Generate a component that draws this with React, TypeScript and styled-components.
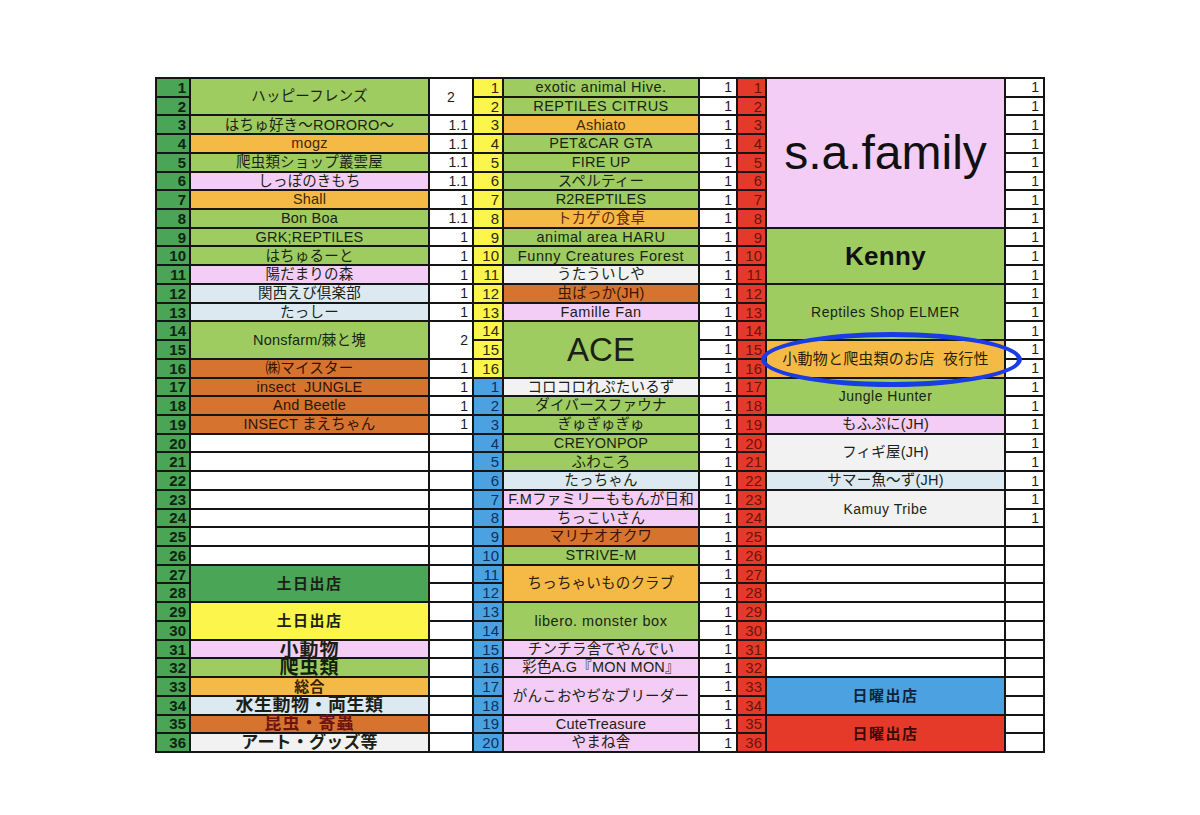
import React from "react";
import styled, { createGlobalStyle } from "styled-components";

const GlobalStyle = createGlobalStyle`
  html, body { margin: 0; padding: 0; background: #ffffff; }
  body { font-family: "Liberation Sans", "Noto Sans CJK JP", sans-serif; }
`;

const COL = {
  green: "#9ecc60",
  orange: "#f5ba45",
  pink: "#f3cdf5",
  lblue: "#dde9f1",
  brown: "#d6732f",
  gray: "#f2f2f2",
  white: "#ffffff",
  dgreen: "#4aa557",
  yellow: "#fcf54b",
  blue: "#4ca2e0",
  red: "#e53a2a",
};

const Page = styled.div`
  padding: 77px 0 0 155px;
`;

const Sheet = styled.div`
  position: relative;
  display: grid;
  grid-template-columns: 32px 237px 42px 28px 194px 36px 27px 237px 37px;
  grid-template-rows: repeat(36, 1fr);
  gap: 2px;
  padding: 2px;
  width: 890px;
  height: 676px;
  box-sizing: border-box;
  background: #151515;
  font-family: "Liberation Sans", "Noto Sans CJK JP", sans-serif;
`;

type Pos = { $c: number; $r: number; $s?: number };

const CellBase = styled.div<Pos>`
  grid-column: ${(p) => p.$c};
  grid-row: ${(p) => p.$r} / span ${(p) => p.$s ?? 1};
  display: flex;
  align-items: center;
  min-width: 0;
  min-height: 0;
  line-height: 1;
  white-space: nowrap;
`;

const NumCell = styled(CellBase)<{ $bg: string; $fg: string; $bold?: boolean }>`
  justify-content: flex-end;
  padding-right: 3px;
  background: ${(p) => p.$bg};
  color: ${(p) => p.$fg};
  font-size: 15px;
  font-weight: ${(p) => (p.$bold ? 700 : 400)};
`;

const NameCell = styled(CellBase)<{
  $bg: string;
  $fg?: string;
  $size?: number;
  $bold?: boolean;
  $ls?: number;
}>`
  justify-content: center;
  overflow: visible;
  background: ${(p) => p.$bg};
  color: ${(p) => p.$fg ?? "#1b1f16"};
  font-size: ${(p) => p.$size ?? 14.5}px;
  font-weight: ${(p) => (p.$bold ? 700 : 400)};
  letter-spacing: ${(p) => p.$ls ?? 0.2}px;
`;

const CountCell = styled(CellBase)<{ $center?: boolean }>`
  justify-content: ${(p) => (p.$center ? "center" : "flex-end")};
  padding-right: ${(p) => (p.$center ? 0 : 4)}px;
  background: #ffffff;
  color: #1a1a1a;
  font-size: 14px;
`;

const Highlight = styled.div`
  position: absolute;
  left: 606px;
  top: 255px;
  width: 261px;
  height: 55px;
  box-sizing: border-box;
  border: 5px solid #1a3ce4;
  border-radius: 50%;
  pointer-events: none;
`;

type Name = {
  r: number;
  s?: number;
  t: string;
  bg: string;
  fg?: string;
  size?: number;
  bold?: boolean;
  ls?: number;
};
type Count = { r: number; s?: number; t: string; center?: boolean };

const leftNames: Name[] = [
  { r: 1, s: 2, t: "ハッピーフレンズ", bg: COL.green },
  { r: 3, t: "はちゅ好き〜RORORO〜", bg: COL.green },
  { r: 4, t: "mogz", bg: COL.orange, fg: "#3a2a08" },
  { r: 5, t: "爬虫類ショップ叢雲屋", bg: COL.green },
  { r: 6, t: "しっぽのきもち", bg: COL.pink },
  { r: 7, t: "Shall", bg: COL.orange, fg: "#3a2a08" },
  { r: 8, t: "Bon Boa", bg: COL.green },
  { r: 9, t: "GRK;REPTILES", bg: COL.green },
  { r: 10, t: "はちゅるーと", bg: COL.green },
  { r: 11, t: "陽だまりの森", bg: COL.pink },
  { r: 12, t: "関西えび倶楽部", bg: COL.lblue },
  { r: 13, t: "たっしー", bg: COL.lblue },
  { r: 14, s: 2, t: "Nonsfarm/棘と塊", bg: COL.green },
  { r: 16, t: "㈱マイスター", bg: COL.brown, fg: "#2e1505" },
  { r: 17, t: "insect\u00a0\u00a0JUNGLE", bg: COL.brown, fg: "#2e1505" },
  { r: 18, t: "And Beetle", bg: COL.brown, fg: "#2e1505" },
  { r: 19, t: "INSECT まえちゃん", bg: COL.brown, fg: "#2e1505" },
  ...[20, 21, 22, 23, 24, 25, 26].map((r) => ({ r, t: "", bg: COL.white })),
  { r: 27, s: 2, t: "土日出店", bg: COL.dgreen, bold: true, size: 15, ls: 1.5 },
  { r: 29, s: 2, t: "土日出店", bg: COL.yellow, bold: true, size: 15, ls: 1.5 },
  { r: 31, t: "小動物", bg: COL.pink, bold: true, size: 19, ls: 1 },
  { r: 32, t: "爬虫類", bg: COL.green, bold: true, size: 19, ls: 1, fg: "#13200c" },
  { r: 33, t: "総合", bg: COL.orange, bold: true, size: 15, fg: "#3a2206" },
  { r: 34, t: "水生動物・両生類", bg: COL.lblue, bold: true, size: 18, ls: 0.5 },
  { r: 35, t: "昆虫・寄蟲", bg: COL.brown, bold: true, size: 17, ls: 1, fg: "#6e140c" },
  { r: 36, t: "アート・グッズ等", bg: COL.gray, bold: true, size: 17 },
];

const leftCounts: Count[] = [
  { r: 1, s: 2, t: "2", center: true },
  { r: 3, t: "1.1" },
  { r: 4, t: "1.1" },
  { r: 5, t: "1.1" },
  { r: 6, t: "1.1" },
  { r: 7, t: "1" },
  { r: 8, t: "1.1" },
  { r: 9, t: "1" },
  { r: 10, t: "1" },
  { r: 11, t: "1" },
  { r: 12, t: "1" },
  { r: 13, t: "1" },
  { r: 14, s: 2, t: "2" },
  { r: 16, t: "1" },
  { r: 17, t: "1" },
  { r: 18, t: "1" },
  { r: 19, t: "1" },
  ...Array.from({ length: 17 }, (_, i) => ({ r: 20 + i, t: "" })),
];

const midNames: Name[] = [
  { r: 1, t: "exotic animal Hive.", bg: COL.green, ls: 0.5 },
  { r: 2, t: "REPTILES CITRUS", bg: COL.green, ls: 0.5 },
  { r: 3, t: "Ashiato", bg: COL.orange, fg: "#3a2a08" },
  { r: 4, t: "PET&CAR GTA", bg: COL.green },
  { r: 5, t: "FIRE UP", bg: COL.green },
  { r: 6, t: "スペルティー", bg: COL.green },
  { r: 7, t: "R2REPTILES", bg: COL.green },
  { r: 8, t: "トカゲの食卓", bg: COL.orange, fg: "#6b2410" },
  { r: 9, t: "animal area HARU", bg: COL.green, ls: 0.5 },
  { r: 10, t: "Funny Creatures Forest", bg: COL.green, ls: 0.6 },
  { r: 11, t: "うたういしや", bg: COL.gray },
  { r: 12, t: "虫ばっか(JH)", bg: COL.brown, fg: "#3a1306" },
  { r: 13, t: "Famille Fan", bg: COL.pink, ls: 0.5 },
  { r: 14, s: 3, t: "ACE", bg: COL.green, size: 33, ls: 0 },
  { r: 17, t: "コロコロれぷたいるず", bg: COL.gray },
  { r: 18, t: "ダイバースファウナ", bg: COL.green },
  { r: 19, t: "ぎゅぎゅぎゅ", bg: COL.green },
  { r: 20, t: "CREYONPOP", bg: COL.green },
  { r: 21, t: "ふわころ", bg: COL.green },
  { r: 22, t: "たっちゃん", bg: COL.lblue },
  { r: 23, t: "F.Mファミリーももんが日和", bg: COL.pink },
  { r: 24, t: "ちっこいさん", bg: COL.pink },
  { r: 25, t: "マリナオオクワ", bg: COL.brown, fg: "#3a1306" },
  { r: 26, t: "STRIVE-M", bg: COL.green },
  { r: 27, s: 2, t: "ちっちゃいものクラブ", bg: COL.orange, fg: "#2e2006" },
  { r: 29, s: 2, t: "libero. monster box", bg: COL.green, ls: 0.5 },
  { r: 31, t: "チンチラ舎てやんでい", bg: COL.pink },
  { r: 32, t: "彩色A.G『MON MON』", bg: COL.pink },
  { r: 33, s: 2, t: "がんこおやぢなブリーダー", bg: COL.pink },
  { r: 35, t: "CuteTreasure", bg: COL.pink },
  { r: 36, t: "やまね舎", bg: COL.pink },
];

const midCounts: Count[] = Array.from({ length: 36 }, (_, i) => ({ r: i + 1, t: "1" }));

const rightNames: Name[] = [
  { r: 1, s: 8, t: "s.a.family", bg: COL.pink, size: 48, ls: 0, fg: "#111" },
  { r: 9, s: 3, t: "Kenny", bg: COL.green, size: 26, bold: true, ls: 0.3, fg: "#111" },
  { r: 12, s: 3, t: "Reptiles Shop ELMER", bg: COL.green, size: 14, ls: 0.5 },
  { r: 15, s: 2, t: "小動物と爬虫類のお店\u00a0\u00a0夜行性", bg: COL.orange, size: 15, fg: "#2a1c04" },
  { r: 17, s: 2, t: "Jungle Hunter", bg: COL.green, size: 14, ls: 0.5 },
  { r: 19, t: "もふぷに(JH)", bg: COL.pink },
  { r: 20, s: 2, t: "フィギ屋(JH)", bg: COL.gray },
  { r: 22, t: "サマー魚〜ず(JH)", bg: COL.lblue },
  { r: 23, s: 2, t: "Kamuy Tribe", bg: COL.gray, size: 14, ls: 0.5 },
  ...[25, 26, 27, 28, 29, 30, 31, 32].map((r) => ({ r, t: "", bg: COL.white })),
  { r: 33, s: 2, t: "日曜出店", bg: COL.blue, bold: true, size: 15, ls: 1.5, fg: "#10223a" },
  { r: 35, s: 2, t: "日曜出店", bg: COL.red, bold: true, size: 15, ls: 1.5, fg: "#3a0a06" },
];

const rightCounts: Count[] = Array.from({ length: 36 }, (_, i) => ({
  r: i + 1,
  t: i < 24 ? "1" : "",
}));

const rows = Array.from({ length: 36 }, (_, i) => i + 1);

function Section({
  start,
  names,
  counts,
  num,
}: {
  start: number;
  names: Name[];
  counts: Count[];
  num: (r: number) => { label: number; bg: string; fg: string; bold?: boolean };
}) {
  return (
    <>
      {rows.map((r) => {
        const n = num(r);
        return (
          <NumCell key={`n${r}`} $c={start} $r={r} $bg={n.bg} $fg={n.fg} $bold={n.bold}>
            {n.label}
          </NumCell>
        );
      })}
      {names.map((n) => (
        <NameCell
          key={`t${n.r}`}
          $c={start + 1}
          $r={n.r}
          $s={n.s}
          $bg={n.bg}
          $fg={n.fg}
          $size={n.size}
          $bold={n.bold}
          $ls={n.ls}
        >
          {n.t}
        </NameCell>
      ))}
      {counts.map((c) => (
        <CountCell key={`c${c.r}`} $c={start + 2} $r={c.r} $s={c.s} $center={c.center}>
          {c.t}
        </CountCell>
      ))}
    </>
  );
}

export default function App() {
  return (
    <>
      <GlobalStyle />
      <Page>
        <Sheet>
          <Section
            start={1}
            names={leftNames}
            counts={leftCounts}
            num={(r) => ({ label: r, bg: COL.dgreen, fg: "#10240f", bold: true })}
          />
          <Section
            start={4}
            names={midNames}
            counts={midCounts}
            num={(r) =>
              r <= 16
                ? { label: r, bg: COL.yellow, fg: "#2a2a10" }
                : { label: r - 16, bg: COL.blue, fg: "#0c2f62" }
            }
          />
          <Section
            start={7}
            names={rightNames}
            counts={rightCounts}
            num={(r) => ({ label: r, bg: COL.red, fg: "#6e120a" })}
          />
          <Highlight />
        </Sheet>
      </Page>
    </>
  );
}
